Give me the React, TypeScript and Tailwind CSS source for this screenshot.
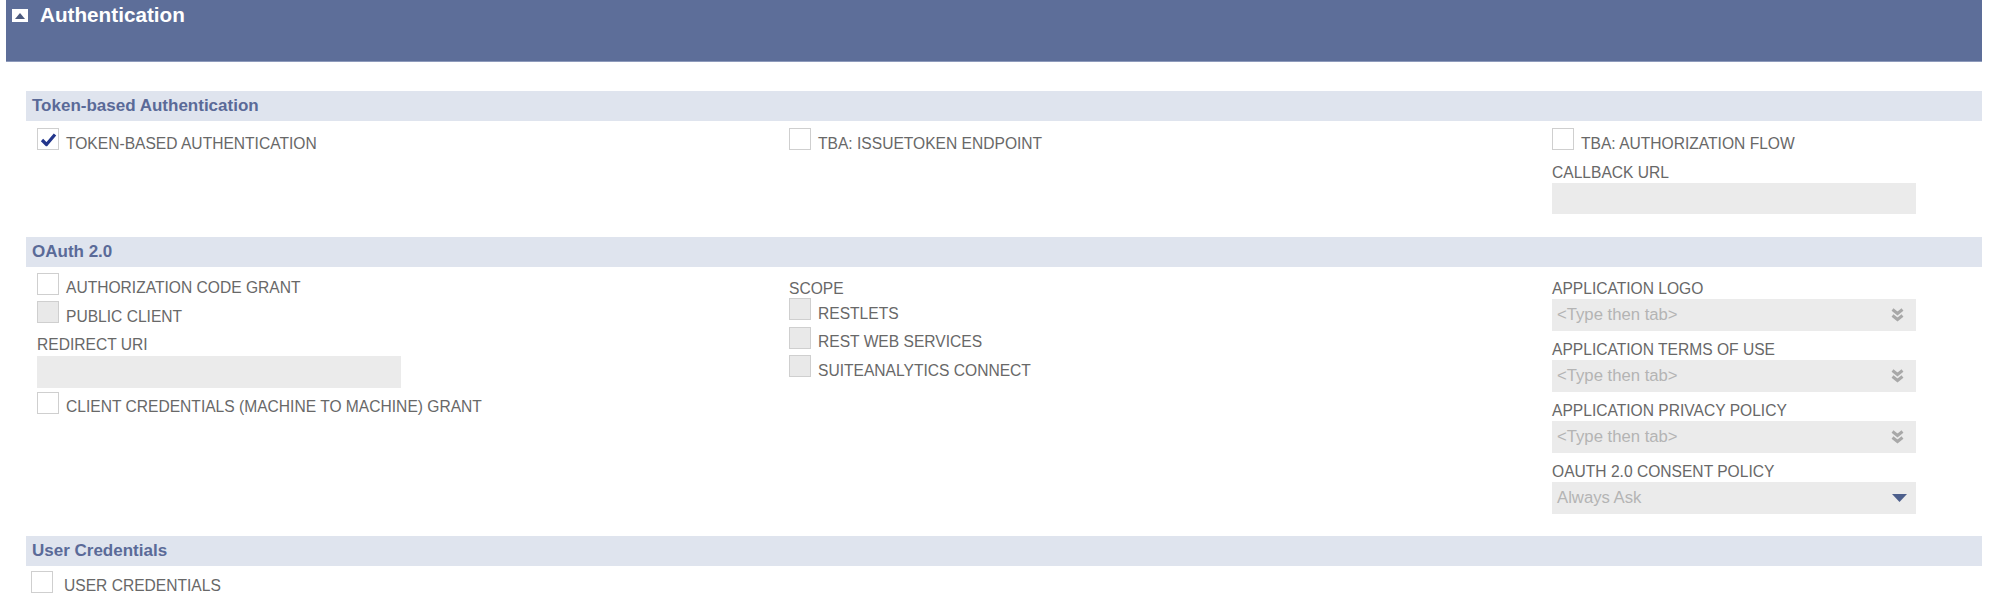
import React from "react";

const label = "text-[15.6px] leading-[18px] text-[#686868] uppercase whitespace-nowrap";

function Box({ checked, disabled }: { checked?: boolean; disabled?: boolean }) {
  return (
    <div
      className={`w-[22px] h-[22px] shrink-0 border border-[#cfcfcf] flex items-center justify-center ${
        disabled ? "bg-[#e9e9e9]" : "bg-white"
      }`}
    >
      {checked && (
        <svg width="17" height="15" viewBox="0 0 17 15">
          <path d="M2 8l4.5 4.5L15 2.5" fill="none" stroke="#23368c" strokeWidth="3.2" strokeLinejoin="round" />
        </svg>
      )}
    </div>
  );
}

function Check({ text, checked, disabled, gap = "gap-[7px]" }: { text: string; checked?: boolean; disabled?: boolean; gap?: string }) {
  return (
    <div className={`flex items-start h-[28.5px] ${gap}`}>
      <Box checked={checked} disabled={disabled} />
      <span className={`${label} mt-[6.5px]`}>{text}</span>
    </div>
  );
}

function Band({ title }: { title: string }) {
  return (
    <div className="h-[30px] bg-[#dfe4ee] pl-[6px] text-[17px] leading-[30px] font-bold text-[#5a6a98]">
      {title}
    </div>
  );
}

function DoubleChevron() {
  return (
    <svg width="13" height="14" viewBox="0 0 13 14" className="mr-[12px]">
      <path d="M1.5 1.5l5 4 5-4M1.5 7.5l5 4 5-4" fill="none" stroke="#a8a8a8" strokeWidth="3" />
    </svg>
  );
}

function Field({ name, value, arrow, className = "" }: { name: string; value: string; arrow: "double" | "down"; className?: string }) {
  return (
    <div className={className}>
      <div className={label}>{name}</div>
      <div className="mt-[1px] w-[364px] h-[32px] bg-[#ebebeb] flex items-center justify-between pl-[5px]">
        <span className="text-[16.7px] text-[#b4b4b4]">{value}</span>
        {arrow === "double" ? (
          <DoubleChevron />
        ) : (
          <svg width="15" height="8" viewBox="0 0 15 8" className="mr-[9px]">
            <path d="M0 0h15L7.5 8z" fill="#4d5f8c" />
          </svg>
        )}
      </div>
    </div>
  );
}

export default function App() {
  return (
    <div className="w-[1990px] h-[598px] bg-white overflow-hidden font-['Liberation_Sans',Arial,sans-serif]">
      {/* Title bar */}
      <div className="ml-[6px] w-[1976px] h-[62px] bg-[#5d6e99] border-b border-[#8d9abb] flex items-start">
        <div className="ml-[6px] mt-[9px] w-[16px] h-[13px] bg-white flex items-center justify-center">
          <svg width="10" height="6" viewBox="0 0 10 6">
            <path d="M0 6L5 0l5 6z" fill="#4c5a7e" />
          </svg>
        </div>
        <h1 className="ml-[12px] mt-[3px] text-[20.7px] leading-[24px] font-bold text-white">Authentication</h1>
      </div>

      <div className="pl-[26px] pr-[8px]">
        {/* Token-based */}
        <div className="mt-[29px]">
          <Band title="Token-based Authentication" />
          <div className="grid grid-cols-[752px_763px_1fr] pl-[11px] pt-[7px] pb-[23px]">
            <div>
              <Check text="Token-based Authentication" checked />
            </div>
            <div>
              <Check text="TBA: IssueToken Endpoint" />
            </div>
            <div>
              <Check text="TBA: Authorization Flow" />
              <div className={`${label} mt-[7px]`}>Callback URL</div>
              <div className="mt-[1px] w-[364px] h-[31px] bg-[#ebebeb]" />
            </div>
          </div>
        </div>

        {/* OAuth */}
        <Band title="OAuth 2.0" />
        <div className="grid grid-cols-[752px_763px_1fr] pl-[11px] pb-[22px]">
          <div className="pt-[6px]">
            <Check text="Authorization Code Grant" />
            <Check text="Public Client" disabled />
            <div className={`${label} mt-[6.5px]`}>Redirect URI</div>
            <div className="mt-[1.5px] w-[364px] h-[32px] bg-[#ebebeb]" />
            <div className="mt-[4px]">
              <Check text="Client Credentials (Machine to Machine) Grant" />
            </div>
          </div>
          <div className="pt-[13.5px]">
            <div className={label}>Scope</div>
            <Check text="RESTlets" disabled />
            <Check text="REST Web Services" disabled />
            <Check text="SuiteAnalytics Connect" disabled />
          </div>
          <div className="pt-[3px]">
            <Field className="mt-[10px]" name="Application Logo" value="<Type then tab>" arrow="double" />
            <Field className="mt-[10px]" name="Application Terms of Use" value="<Type then tab>" arrow="double" />
            <Field className="mt-[10px]" name="Application Privacy Policy" value="<Type then tab>" arrow="double" />
            <Field className="mt-[10px]" name="OAuth 2.0 Consent Policy" value="Always Ask" arrow="down" />
          </div>
        </div>

        {/* User credentials */}
        <Band title="User Credentials" />
        <div className="pl-[5px] pt-[5px]">
          <Check text="User Credentials" gap="gap-[11px]" />
        </div>
      </div>
    </div>
  );
}
